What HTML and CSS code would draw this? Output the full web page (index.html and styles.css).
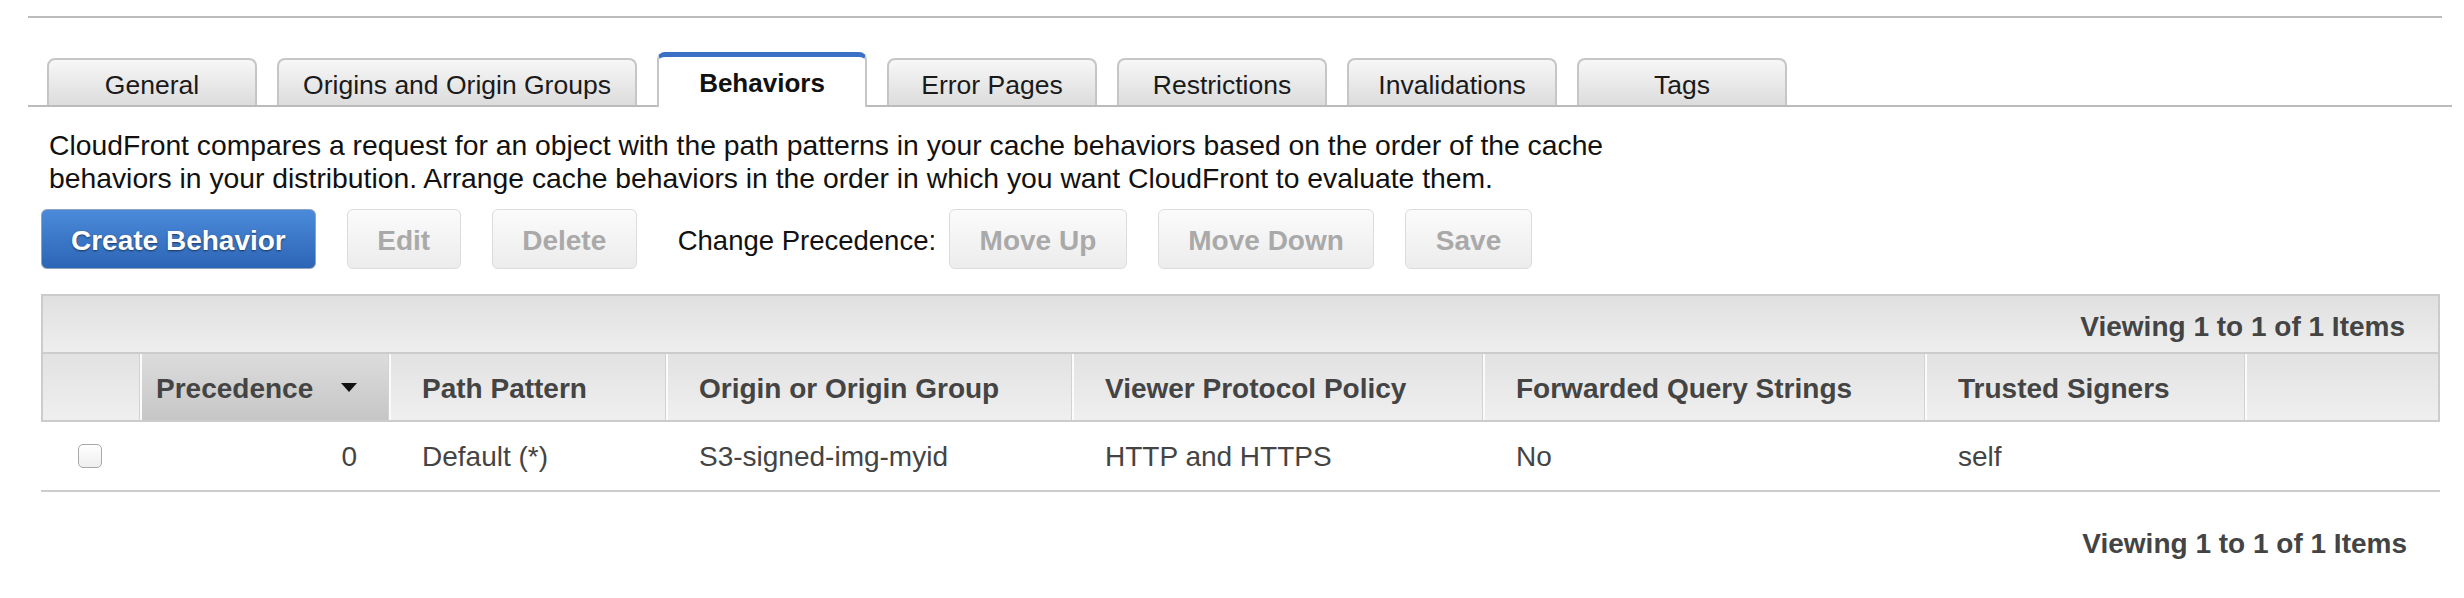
FILE: index.html
```html
<!DOCTYPE html>
<html>
<head>
<meta charset="utf-8">
<title>CloudFront Behaviors</title>
<link rel="stylesheet" href="styles.css">
</head>
<body>
<div class="toprule"></div>
<div class="tabs">
  <div class="tab w210">General</div>
  <div class="tab w360">Origins and Origin Groups</div>
  <div class="tab w210 active">Behaviors</div>
  <div class="tab w210">Error Pages</div>
  <div class="tab w210">Restrictions</div>
  <div class="tab w210">Invalidations</div>
  <div class="tab w210">Tags</div>
</div>
<p class="desc">CloudFront compares a request for an object with the path patterns in your cache behaviors based on the order of the cache behaviors in your distribution. Arrange cache behaviors in the order in which you want CloudFront to evaluate them.</p>
<div class="actions">
  <button class="btn primary">Create Behavior</button>
  <button class="btn">Edit</button>
  <button class="btn">Delete</button>
  <span class="label">Change Precedence:</span>
  <button class="btn">Move Up</button>
  <button class="btn">Move Down</button>
  <button class="btn">Save</button>
</div>
<div class="grid-head">
  <div class="toolbar">Viewing 1 to 1 of 1 Items</div>
  <div class="hrow">
    <div class="hcell first"></div>
    <div class="hcell sorted"><span>Precedence</span><span class="tri"></span></div>
    <div class="hcell">Path Pattern</div>
    <div class="hcell">Origin or Origin Group</div>
    <div class="hcell">Viewer Protocol Policy</div>
    <div class="hcell">Forwarded Query Strings</div>
    <div class="hcell">Trusted Signers</div>
    <div class="hcell last"></div>
  </div>
</div>
<div class="drow">
  <div class="dcell chk"><span class="checkbox"></span></div>
  <div class="dcell num">0</div>
  <div class="dcell">Default (*)</div>
  <div class="dcell">S3-signed-img-myid</div>
  <div class="dcell">HTTP and HTTPS</div>
  <div class="dcell">No</div>
  <div class="dcell">self</div>
  <div class="dcell"></div>
</div>
<div class="footer">Viewing 1 to 1 of 1 Items</div>
</body>
</html>
```

FILE: styles.css
```css
html, body {
  margin: 0;
  padding: 0;
  background: #fff;
}
body {
  font-family: "Liberation Sans", Helvetica, Arial, sans-serif;
  font-size: 28px;
  color: #111;
}
.toprule {
  margin: 16px 0 0 28px;
  width: 2414px;
  height: 2px;
  background: #bbbbbb;
}
.tabs {
  margin-left: 28px;
  width: 2424px;
  height: 89px;
  box-sizing: border-box;
  padding-left: 19px;
  border-bottom: 2px solid #bbbbbb;
  display: flex;
  align-items: flex-end;
}
.tab {
  box-sizing: border-box;
  height: 47px;
  margin-right: 20px;
  border: 2px solid #c6c6c6;
  border-bottom: none;
  border-radius: 8px 8px 0 0;
  background: linear-gradient(#f7f7f7, #dcdcdc);
  font-size: 26.5px;
  color: #1a1a1a;
  display: flex;
  align-items: center;
  justify-content: center;
  padding-top: 6px;
}
.w210 { width: 210px; }
.w360 { width: 360px; }
.tab.active {
  height: 55px;
  margin-bottom: -2px;
  background: #fff;
  border-color: #c6c6c6;
  border-top: 5px solid #3a70c6;
  font-weight: bold;
  font-size: 26px;
  color: #111;
  padding-top: 3px;
}
.desc {
  margin: 22px 0 0 49px;
  width: 1640px;
  font-size: 28.3px;
  line-height: 33px;
}
.actions {
  margin: 14px 0 0 41px;
  display: flex;
  align-items: center;
  height: 60px;
}
.btn {
  box-sizing: border-box;
  height: 60px;
  padding: 3px 29.5px 0;
  border: 1px solid #dcdcdc;
  border-radius: 6px;
  background: linear-gradient(#fbfbfb, #ececec);
  font-family: "Liberation Sans", Helvetica, Arial, sans-serif;
  font-size: 28px;
  font-weight: bold;
  color: #a9a9a9;
  line-height: 55px;
  margin: 0;
}
.btn + .btn {
  margin-left: 31px;
}
.btn.primary {
  padding: 3px 29px 0;
  background: linear-gradient(#4b8ada, #2d65b5);
  border-color: #8fa3c0;
  color: #fff;
  text-shadow: 0 1px 2px rgba(0, 0, 0, 0.55);
}
.label {
  margin: 0 13px 0 41px;
  padding-top: 3px;
  font-size: 27.5px;
  color: #111;
}
.grid-head {
  margin: 25px 0 0 41px;
  width: 2399px;
  box-sizing: border-box;
  border: 2px solid #cccccc;
}
.toolbar {
  height: 58px;
  box-sizing: border-box;
  border-bottom: 2px solid #cccccc;
  background: linear-gradient(#e0e0e0, #eeeeee);
  display: flex;
  align-items: center;
  justify-content: flex-end;
  padding: 5px 33px 0 0;
  font-weight: bold;
  color: #444;
}
.hrow {
  display: grid;
  grid-template-columns: 97px 249px 277px 406px 411px 442px 320px 193px;
  height: 66px;
}
.hcell {
  box-sizing: border-box;
  background: linear-gradient(#e2e2e2, #efefef);
  border-left: 2px solid #fbfbfb;
  border-right: 1px solid #d2d2d2;
  display: flex;
  align-items: center;
  padding: 4px 0 0 31px;
  font-weight: bold;
  color: #444;
}
.hcell.first {
  border-left: none;
}
.hcell.last {
  border-right: none;
}
.hcell.sorted {
  background: linear-gradient(#dcdcdc, #c6c6c6);
  justify-content: space-between;
  padding: 0 31px 0 14px;
}
.hcell.sorted span:first-child {
  padding-top: 4px;
}
.tri {
  width: 0;
  height: 0;
  border-left: 8px solid transparent;
  border-right: 8px solid transparent;
  border-top: 9px solid #111;
}
.drow {
  margin-left: 41px;
  width: 2399px;
  display: grid;
  grid-template-columns: 99px 249px 277px 406px 411px 442px 320px 195px;
  height: 70px;
  box-sizing: border-box;
  border-bottom: 2px solid #cccccc;
}
.dcell {
  display: flex;
  align-items: center;
  padding: 2px 0 0 33px;
  color: #444;
  white-space: nowrap;
}
.dcell.chk {
  padding: 0 0 0 37px;
}
.dcell.num {
  justify-content: flex-end;
  padding: 2px 32px 0 0;
}
.checkbox {
  width: 24px;
  height: 24px;
  box-sizing: border-box;
  border: 1px solid #a8a8a8;
  border-radius: 5px;
  background: linear-gradient(#ffffff, #eeeeee);
}
.footer {
  margin: 35px 0 0 41px;
  width: 2399px;
  box-sizing: border-box;
  padding-right: 33px;
  text-align: right;
  line-height: 33px;
  font-weight: bold;
  color: #444;
}
```
